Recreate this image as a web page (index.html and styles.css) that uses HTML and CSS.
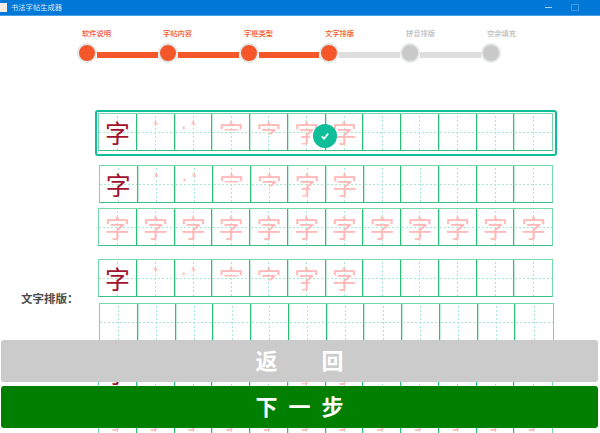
FILE: index.html
```html
<!DOCTYPE html>
<html lang="zh-CN">
<head>
  <meta charset="UTF-8">
  <title>书法字帖生成器</title>
  <link rel="stylesheet" href="styles.css">
</head>
<body>
  <!-- 标题栏 -->
  <header class="titlebar">
    <span class="app-icon"></span>
    <span class="app-title">书法字帖生成器</span>
    <span class="win-min"></span>
    <span class="win-max"></span>
  </header>

  <!-- 步骤条 -->
  <nav class="stepper">
    <div class="step-labels">
      <span class="on">软件说明</span>
      <span class="on">字帖内容</span>
      <span class="on">字框类型</span>
      <span class="on">文字排版</span>
      <span>拼音排版</span>
      <span>空余填充</span>
    </div>
    <div class="step-track">
      <span class="dot on"></span><span class="bar on"></span>
      <span class="dot on"></span><span class="bar on"></span>
      <span class="dot on"></span><span class="bar on"></span>
      <span class="dot on"></span><span class="bar"></span>
      <span class="dot"></span><span class="bar"></span>
      <span class="dot"></span>
    </div>
  </nav>

  <main class="layout">
    <div class="layout-label">文字排版：</div>
    <div class="options">
      <!-- 选中项 -->
      <div class="option selected">
        <div class="sheet">
          <div class="cell"><span class="ink">字</span></div>
          <div class="cell"><span class="ghost s1">字</span></div>
          <div class="cell"><span class="ghost s2">字</span></div>
          <div class="cell"><span class="ghost s3">字</span></div>
          <div class="cell"><span class="ghost s4">字</span></div>
          <div class="cell"><span class="ghost s5">字</span></div>
          <div class="cell"><span class="ghost">字</span></div>
          <div class="cell"></div><div class="cell"></div><div class="cell"></div><div class="cell"></div><div class="cell"></div>
        </div>
        <span class="check">
          <svg viewBox="0 0 10 10" width="10" height="10"><path d="M1.8 5.4 L4 7.8 L8.2 2.4" fill="none" stroke="#fff" stroke-width="1.7"/></svg>
        </span>
      </div>

      <div class="sheet row-2">
        <div class="cell"><span class="ink">字</span></div>
        <div class="cell"><span class="ghost s1">字</span></div>
        <div class="cell"><span class="ghost s2">字</span></div>
        <div class="cell"><span class="ghost s3">字</span></div>
        <div class="cell"><span class="ghost s4">字</span></div>
        <div class="cell"><span class="ghost s5">字</span></div>
        <div class="cell"><span class="ghost">字</span></div>
        <div class="cell"></div><div class="cell"></div><div class="cell"></div><div class="cell"></div><div class="cell"></div>
      </div>
      <div class="sheet row-3">
        <div class="cell"><span class="ghost">字</span></div><div class="cell"><span class="ghost">字</span></div><div class="cell"><span class="ghost">字</span></div>
        <div class="cell"><span class="ghost">字</span></div><div class="cell"><span class="ghost">字</span></div><div class="cell"><span class="ghost">字</span></div>
        <div class="cell"><span class="ghost">字</span></div><div class="cell"><span class="ghost">字</span></div><div class="cell"><span class="ghost">字</span></div>
        <div class="cell"><span class="ghost">字</span></div><div class="cell"><span class="ghost">字</span></div><div class="cell"><span class="ghost">字</span></div>
      </div>

      <div class="sheet row-4">
        <div class="cell"><span class="ink">字</span></div>
        <div class="cell"><span class="ghost s1">字</span></div>
        <div class="cell"><span class="ghost s2">字</span></div>
        <div class="cell"><span class="ghost s3">字</span></div>
        <div class="cell"><span class="ghost s4">字</span></div>
        <div class="cell"><span class="ghost s5">字</span></div>
        <div class="cell"><span class="ghost">字</span></div>
        <div class="cell"></div><div class="cell"></div><div class="cell"></div><div class="cell"></div><div class="cell"></div>
      </div>
      <div class="sheet row-5">
        <div class="cell"></div><div class="cell"></div><div class="cell"></div><div class="cell"></div><div class="cell"></div><div class="cell"></div>
        <div class="cell"></div><div class="cell"></div><div class="cell"></div><div class="cell"></div><div class="cell"></div><div class="cell"></div>
      </div>

      <div class="sheet row-6">
        <div class="cell"><span class="ink">字</span></div>
        <div class="cell"><span class="ghost s1">字</span></div>
        <div class="cell"><span class="ghost s2">字</span></div>
        <div class="cell"><span class="ghost s3">字</span></div>
        <div class="cell"><span class="ghost s4">字</span></div>
        <div class="cell"><span class="ghost s5">字</span></div>
        <div class="cell"><span class="ghost">字</span></div>
        <div class="cell"></div><div class="cell"></div><div class="cell"></div><div class="cell"></div><div class="cell"></div>
      </div>
      <div class="sheet row-7">
        <div class="cell"><span class="ghost">字</span></div><div class="cell"><span class="ghost">字</span></div><div class="cell"><span class="ghost">字</span></div>
        <div class="cell"><span class="ghost">字</span></div><div class="cell"><span class="ghost">字</span></div><div class="cell"><span class="ghost">字</span></div>
        <div class="cell"><span class="ghost">字</span></div><div class="cell"><span class="ghost">字</span></div><div class="cell"><span class="ghost">字</span></div>
        <div class="cell"><span class="ghost">字</span></div><div class="cell"><span class="ghost">字</span></div><div class="cell"><span class="ghost">字</span></div>
      </div>
    </div>
  </main>

  <!-- 底部按钮盖在内容上面 -->
  <footer class="actions">
    <button class="btn btn-back">返&emsp;&emsp;回</button>
    <button class="btn btn-next">下 一 步</button>
  </footer>
</body>
</html>
```

FILE: styles.css
```css
html, body { margin: 0; height: 100%; }
body { width: 600px; height: 433px; overflow: hidden; position: relative; background: #fff; font-family: "Noto Sans CJK SC", "Liberation Sans", sans-serif; }

/* 标题栏 */
.titlebar { display: flex; align-items: center; height: 15px; background: #0078d7; border-bottom: 1px solid #4a9fe6; }
.app-icon { width: 7px; height: 9px; background: #f7ece4; }
.app-title { margin-left: 4px; font-size: 7.3px; line-height: 15px; color: #d5e8f8; }
.win-min { width: 7px; height: 1px; margin-left: auto; background: #a9d0f1; }
.win-max { width: 6px; height: 5px; margin: 0 21px 0 19px; border: 1px solid #3f97e0; }

/* 步骤条 */
.stepper { padding: 11px 0 0 56px; }
.step-labels { display: flex; }
.step-labels span { width: 81px; text-align: center; font-size: 7.3px; line-height: 12px; font-weight: 500; color: #bdbdbd; }
.step-labels span.on { color: #f4572a; }
.step-track { display: flex; align-items: center; margin: 4px 0 0 21px; }
.dot { flex: none; width: 16px; height: 16px; border: 2px solid #e4e8e8; border-radius: 50%; background: #c9c9c9; }
.dot.on { background: #f4572a; }
.bar { flex: none; width: 60.8px; height: 6px; margin-top: 4px; background: #dedede; }
.bar.on { background: #f4572a; }

/* 文字排版 */
.layout { padding-top: 47px; }
.layout-label { position: absolute; left: 21px; top: 290px; font-size: 11.5px; line-height: 16px; font-weight: 700; color: #4a4a4a; }
.options { margin-left: 98px; width: 455px; }

.sheet { display: grid; grid-template-columns: repeat(12, 1fr); width: 455px; height: 38px; box-sizing: border-box; border: 1px solid #74d8a8; border-bottom-color: #3dc086; }
.cell { display: flex; align-items: center; justify-content: center; min-width: 0; border-left: 1px solid #c4efdb; border-right: 1px solid #2cbd78; overflow: hidden;
  background-image: repeating-linear-gradient(90deg, #a8ead0 0 2px, transparent 2px 4px), repeating-linear-gradient(0deg, #a8ead0 0 2px, transparent 2px 4px);
  background-size: 100% 1px, 1px 100%;
  background-position: center, center;
  background-repeat: no-repeat; }
.cell:first-child { border-left: 0; }
.cell:last-child { border-right: 0; }

.ink, .ghost { display: block; width: 25px; height: 25px; font-size: 25px; line-height: 25px; text-align: center; }
.ink { color: #a2122f; }
.ghost { color: #ffb9b9; }

/* 笔顺：同一个字只露出写到这一笔的部分 */
.s1 { clip-path: polygon(38% 0, 62% 0, 62% 20%, 38% 20%); }
.s2 { clip-path: polygon(38% 0, 62% 0, 62% 20%, 38% 20%, 38% 28%, 16% 28%, 16% 46%, 2% 46%, 2% 28%, 38% 28%); }
.s3 { clip-path: inset(0 0 56% 0); }
.s4 { clip-path: inset(0 0 40% 0); }
.s5 { clip-path: polygon(0 0, 100% 0, 100% 60%, 62% 60%, 62% 100%, 28% 100%, 28% 60%, 0 60%); }

.option.selected { position: relative; box-sizing: border-box; width: 462px; height: 46px; margin-left: -3px; padding: 3px 0 0 3px; border-radius: 3px; box-shadow: inset 0 0 0 2px #10bd99; }
.check { position: absolute; left: 218px; top: 14px; display: flex; align-items: center; justify-content: center; width: 24px; height: 24px; border-radius: 50%; background: #10bd99; }

.row-2 { margin: 9px 0 0 1px; width: 454px; }
.row-3 { margin-top: 5px; }
.row-4 { margin-top: 13px; }
.row-5 { margin: 6px 0 0 1px; }
.row-6 { margin-top: 12px; }
.row-7 { margin-top: 8px; }

/* 底部按钮 */
.actions { position: absolute; left: 1px; top: 340px; display: flex; flex-direction: column; gap: 4px; width: 597px; }
.btn { display: block; height: 42px; padding: 0 0 4px; border: 0; border-radius: 3px; color: #fff; font-family: inherit; font-size: 22px; font-weight: 700; line-height: 34px; }
.btn-back { background: #cbcbcb; }
.btn-next { background: #007f00; word-spacing: 6px; }
```
